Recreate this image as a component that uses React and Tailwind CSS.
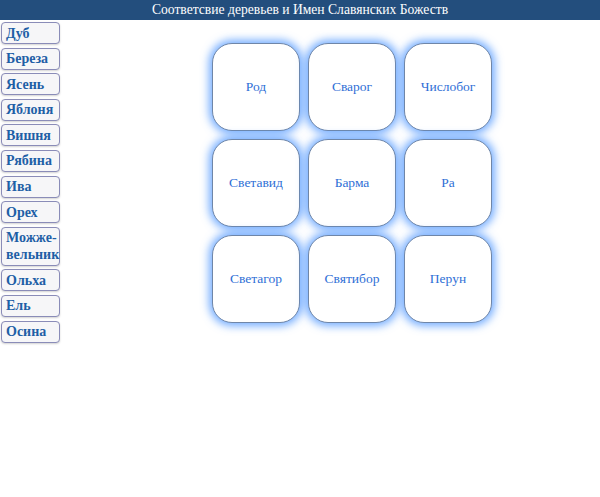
const TREES = ['Дуб', 'Береза', 'Ясень', 'Яблоня', 'Вишня', 'Рябина', 'Ива', 'Орех', 'Можже-вельник', 'Ольха', 'Ель', 'Осина']

const GODS = ['Род', 'Сварог', 'Числобог', 'Светавид', 'Барма', 'Ра', 'Светагор', 'Святибор', 'Перун']

export default function App() {
  return (
    <div className="min-h-screen bg-white font-['Liberation_Serif','DejaVu_Serif',serif]">
      <header className="h-[20px] bg-[#234e7d] text-white text-[13.6px] leading-[19px] text-center">
        Соответсвие деревьев и Имен Славянских Божеств
      </header>

      <div className="flex">
        <nav className="w-[60px] pl-[1px] pt-[2px] flex flex-col gap-[3.6px]">
          {TREES.map(t => (
            <button
              key={t}
              className={`w-[59px] ${t === 'Можже-вельник' ? 'h-[39px]' : 'h-[22px]'} text-left pl-[4px] pr-[1px] rounded-[4px] border border-[#8a8cb8] bg-[#f6f6f8] shadow-[0_1px_2px_rgba(0,0,0,0.18)] text-[#1e5fa6] text-[14px] font-bold leading-[17px]`}
            >
              {t === 'Можже-вельник' ? <>Можже-<br />вельник</> : t}
            </button>
          ))}
        </nav>

        <main className="flex-1 pt-[23px] pl-[152px]">
          <div className="grid grid-cols-[repeat(3,88px)] gap-[8px]">
            {GODS.map(g => (
              <div
                key={g}
                className="h-[88px] rounded-[20px] border border-[#6f86a8] bg-white shadow-[0_0_9px_3px_rgba(70,145,255,0.75)] flex items-center justify-center text-[#2f6fd6] text-[13.5px]"
              >
                {g}
              </div>
            ))}
          </div>
        </main>
      </div>
    </div>
  )
}
